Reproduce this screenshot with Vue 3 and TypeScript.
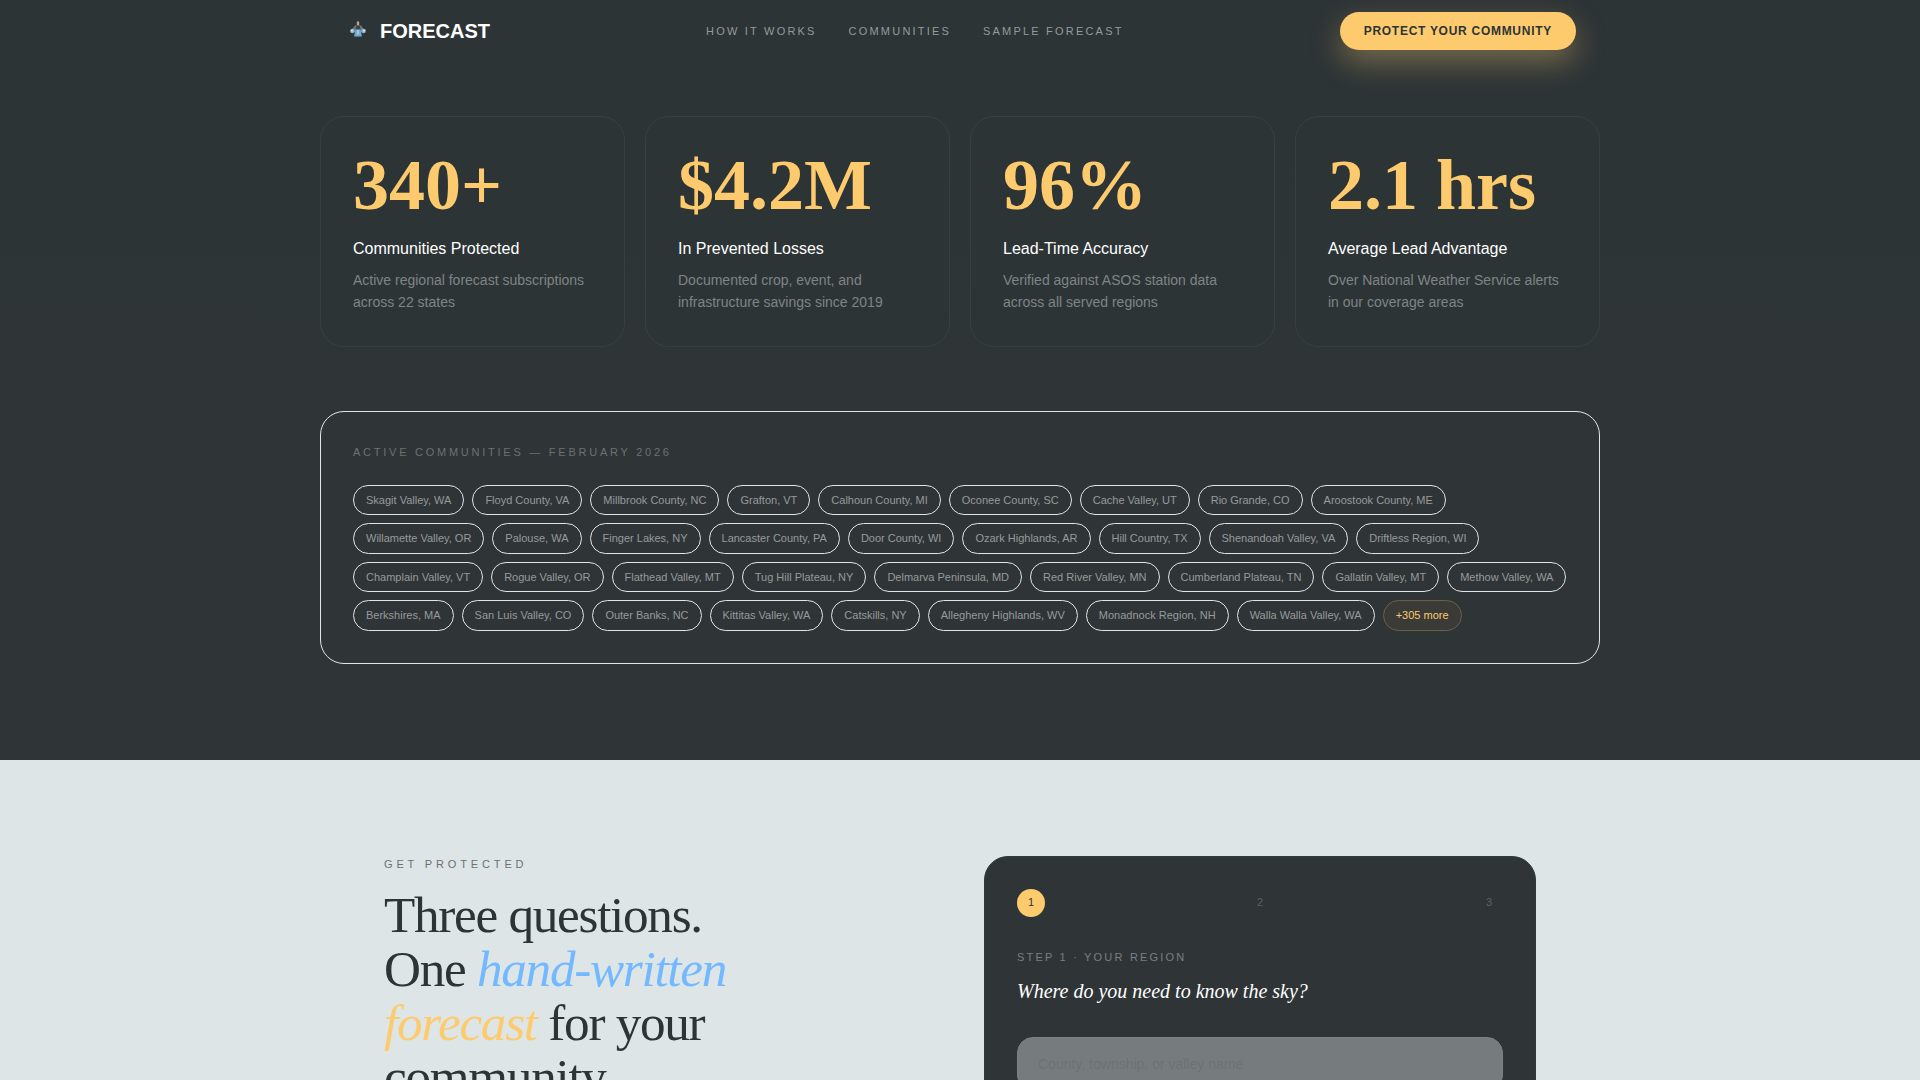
<script setup lang="ts">
interface Stat {
  value: string
  label: string
  note: string
}

const links: string[] = ['How it works', 'Communities', 'Sample forecast']

const stats: Stat[] = [
  { value: '340+', label: 'Communities Protected', note: 'Active regional forecast subscriptions across 22 states' },
  { value: '$4.2M', label: 'In Prevented Losses', note: 'Documented crop, event, and infrastructure savings since 2019' },
  { value: '96%', label: 'Lead-Time Accuracy', note: 'Verified against ASOS station data across all served regions' },
  { value: '2.1 hrs', label: 'Average Lead Advantage', note: 'Over National Weather Service alerts in our coverage areas' },
]

const communities: string[] = [
  'Skagit Valley, WA', 'Floyd County, VA', 'Millbrook County, NC', 'Grafton, VT', 'Calhoun County, MI',
  'Oconee County, SC', 'Cache Valley, UT', 'Rio Grande, CO', 'Aroostook County, ME',
  'Willamette Valley, OR', 'Palouse, WA', 'Finger Lakes, NY', 'Lancaster County, PA', 'Door County, WI',
  'Ozark Highlands, AR', 'Hill Country, TX', 'Shenandoah Valley, VA', 'Driftless Region, WI',
  'Champlain Valley, VT', 'Rogue Valley, OR', 'Flathead Valley, MT', 'Tug Hill Plateau, NY',
  'Delmarva Peninsula, MD', 'Red River Valley, MN', 'Cumberland Plateau, TN', 'Gallatin Valley, MT', 'Methow Valley, WA',
  'Berkshires, MA', 'San Luis Valley, CO', 'Outer Banks, NC', 'Kittitas Valley, WA', 'Catskills, NY',
  'Allegheny Highlands, WV', 'Monadnock Region, NH', 'Walla Walla Valley, WA',
]

const steps: number[] = [1, 2, 3]
const activeStep = 1
</script>

<template>
  <div class="page">
    <section class="proof">
      <header class="nav">
        <a class="brand">
          <span class="brand-mark">
            <svg width="18" height="18" viewBox="0 0 18 18">
              <path d="M9 4.5 L12.5 6 L15 9.5 L12.5 12.5 H5.5 L3 9.5 L5.5 6 Z" fill="#6d7a80" />
              <rect x="7.8" y="1.2" width="2.4" height="4.4" rx="1.2" fill="#c0a184" />
              <path d="M7.4 5.6 h3.2 l1 3.9 h-5.2 Z" fill="#39454b" />
              <circle cx="3.4" cy="11" r="2.3" fill="#86b4d2" />
              <circle cx="14.6" cy="11" r="2.3" fill="#86b4d2" />
              <circle cx="3" cy="10.6" r="1.1" fill="#cfdfe8" />
              <circle cx="15" cy="10.6" r="1.1" fill="#cfdfe8" />
              <path d="M6.6 9.4 H11.4 L13 16.4 H5 Z" fill="#74a9cc" />
              <path d="M8 10 h2 v4.5 h-2 Z" fill="#9cc9e4" />
            </svg>
          </span>
          <span class="brand-name">FORECAST</span>
        </a>
        <nav class="links">
          <a v-for="link in links" :key="link">{{ link }}</a>
        </nav>
        <button class="cta" type="button">Protect your community</button>
      </header>

      <div class="stats">
        <article v-for="stat in stats" :key="stat.label" class="stat">
          <div class="stat-value">{{ stat.value }}</div>
          <div class="stat-label">{{ stat.label }}</div>
          <p class="stat-note">{{ stat.note }}</p>
        </article>
      </div>

      <div class="communities">
        <div class="eyebrow">Active communities — February 2026</div>
        <div class="chips">
          <span v-for="name in communities" :key="name" class="chip">{{ name }}</span>
          <span class="chip more">+305 more</span>
        </div>
      </div>
    </section>

    <section class="signup">
      <div class="signup-grid">
        <div class="pitch">
          <div class="pitch-eyebrow">Get protected</div>
          <h2>
            Three questions.<br />
            One <em class="blue">hand-written</em><br />
            <em class="gold">forecast</em> for your<br />
            community.
          </h2>
        </div>

        <form class="form-card">
          <div class="steps">
            <span v-for="n in steps" :key="n" class="step" :class="{ active: n === activeStep }">{{ n }}</span>
          </div>
          <div class="step-label">Step 1 · Your region</div>
          <div class="question">Where do you need to know the sky?</div>
          <input class="field" type="text" placeholder="County, township, or valley name" />
        </form>
      </div>
    </section>
  </div>
</template>

<style>
html,
body {
  margin: 0;
  overflow: hidden;
}
</style>

<style scoped>
.page {
  height: 1080px;
  overflow: hidden;
  background: #dde5e6;
  color: #2d3436;
  font-family: 'Liberation Sans', Arial, sans-serif;
  line-height: 1.5;
}

.page *,
.page *::before {
  box-sizing: border-box;
}

.proof {
  height: 759.6px;
  background: linear-gradient(180deg, #2d3436 0%, #2d3436 15%, #2f3537 60%, #2f3537 100%);
}

.nav {
  display: flex;
  align-items: center;
  justify-content: space-between;
  width: 1280px;
  height: 62px;
  margin: 0 auto;
  padding: 0 24px;
}

.brand {
  display: flex;
  align-items: center;
  gap: 8px;
}

.brand-mark {
  display: flex;
  align-items: center;
  justify-content: center;
  width: 28px;
  height: 28px;
  padding-bottom: 4px;
}

.brand-name {
  color: #fff;
  font-size: 20px;
  font-weight: 700;
}

.links {
  display: flex;
  gap: 32px;
}

.links a {
  color: #969a9b;
  font-size: 11px;
  letter-spacing: 0.2em;
  text-transform: uppercase;
}

.cta {
  padding: 10px 24px;
  border: 0;
  border-radius: 999px;
  background: #fdcb6e;
  box-shadow: 0 12px 30px rgba(253, 203, 110, 0.36);
  color: #2d3436;
  font: 700 12px/18px 'Liberation Sans', Arial, sans-serif;
  letter-spacing: 0.06em;
  text-transform: uppercase;
}

.stats {
  display: grid;
  grid-template-columns: repeat(4, 1fr);
  gap: 20px;
  width: 1280px;
  margin: 54px auto 0;
}

.stat {
  padding: 32px;
  border: 1px solid #364043;
  border-radius: 24px;
  background: #2d3436;
}

.stat-value {
  margin-bottom: 16px;
  color: #fdcb6e;
  font-family: 'Liberation Serif', 'Times New Roman', serif;
  font-size: 72px;
  font-weight: 700;
  line-height: 1;
}

.stat-label {
  margin-bottom: 8px;
  color: #fff;
  font-size: 16px;
}

.stat-note {
  margin: 0;
  color: #7f8485;
  font-size: 14px;
  line-height: 1.6;
}

.communities {
  width: 1280px;
  margin: 64.4px auto 0;
  padding: 32px;
  border: 1px solid #dfe6e9;
  border-radius: 24px;
}

.eyebrow {
  margin-bottom: 24px;
  color: #6c7173;
  font-size: 11px;
  letter-spacing: 0.25em;
  text-transform: uppercase;
}

.chips {
  display: flex;
  flex-wrap: wrap;
  gap: 8px;
}

.chip {
  padding: 6px 12px;
  border: 1px solid #dfe6e9;
  border-radius: 999px;
  color: #969a9b;
  font-size: 11px;
}

.chip.more {
  border-color: #6b6047;
  background: #3a3a37;
  color: #fdcb6e;
}

.signup {
  padding-top: 96px;
}

.signup-grid {
  display: grid;
  grid-template-columns: 1fr 1fr;
  gap: 48px;
  width: 1152px;
  margin: 0 auto;
}

.pitch-eyebrow {
  margin-bottom: 15.9px;
  color: #6a7274;
  font-size: 11px;
  letter-spacing: 0.35em;
  text-transform: uppercase;
}

h2 {
  margin: 0;
  font-family: 'Liberation Serif', 'Times New Roman', serif;
  font-size: 51.2px;
  font-weight: 400;
  letter-spacing: -0.025em;
  line-height: 54px;
}

.blue {
  color: #74b9ff;
}

.gold {
  color: #fdcb6e;
}

.form-card {
  height: 520px;
  padding: 32px;
  border: 1px solid #2d3a3c;
  border-radius: 24px;
  background: #2f3537;
}

.steps {
  display: flex;
  justify-content: space-between;
  margin-bottom: 32px;
}

.step {
  width: 28px;
  height: 28px;
  border-radius: 50%;
  color: #5c6163;
  font-size: 11px;
  line-height: 27.4px;
  text-align: center;
}

.step.active {
  background: #fdcb6e;
  color: #2d3436;
}

.step-label {
  margin-bottom: 10.5px;
  color: #7a7f80;
  font-size: 11px;
  letter-spacing: 0.2em;
  text-transform: uppercase;
}

.question {
  margin-bottom: 31.1px;
  color: #fff;
  font-family: 'Liberation Serif', 'Times New Roman', serif;
  font-size: 20px;
  font-style: italic;
}

.field {
  display: block;
  width: 100%;
  height: 54px;
  padding: 0 20px;
  border: 1px solid #7c8283;
  border-radius: 16px;
  outline: none;
  background: #767c7e;
  font: 14px 'Liberation Sans', Arial, sans-serif;
}

.field::placeholder {
  color: #6c7274;
  opacity: 1;
}
</style>
